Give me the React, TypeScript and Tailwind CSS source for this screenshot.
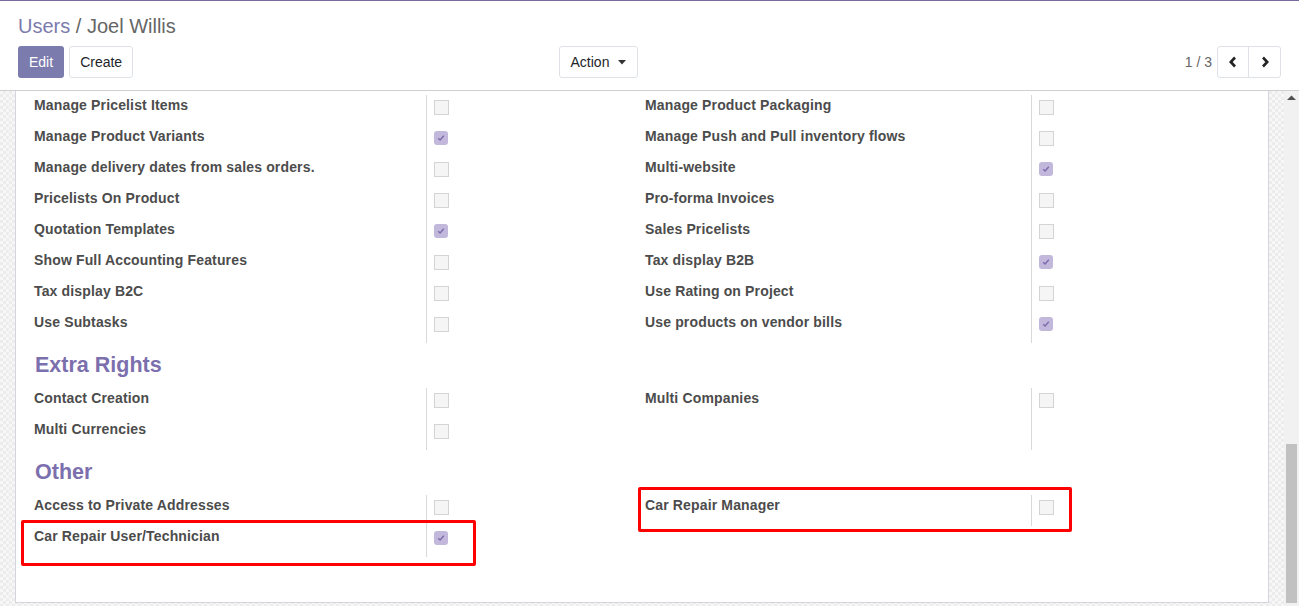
import React from 'react';

type Right = { label: string; checked: boolean } | null;

const mainLeft: Right[] = [
  { label: 'Manage Pricelist Items', checked: false },
  { label: 'Manage Product Variants', checked: true },
  { label: 'Manage delivery dates from sales orders.', checked: false },
  { label: 'Pricelists On Product', checked: false },
  { label: 'Quotation Templates', checked: true },
  { label: 'Show Full Accounting Features', checked: false },
  { label: 'Tax display B2C', checked: false },
  { label: 'Use Subtasks', checked: false },
];

const mainRight: Right[] = [
  { label: 'Manage Product Packaging', checked: false },
  { label: 'Manage Push and Pull inventory flows', checked: false },
  { label: 'Multi-website', checked: true },
  { label: 'Pro-forma Invoices', checked: false },
  { label: 'Sales Pricelists', checked: false },
  { label: 'Tax display B2B', checked: true },
  { label: 'Use Rating on Project', checked: false },
  { label: 'Use products on vendor bills', checked: true },
];

const checker =
  'bg-[conic-gradient(#ececec_25%,#f7f7f7_0_50%,#ececec_0_75%,#f7f7f7_0)] bg-[length:6px_6px]';

function Checkbox({ checked }: { checked: boolean }) {
  if (checked) {
    return (
      <div className="w-[14px] h-[14px] rounded-[3px] bg-[#c2b8dc] flex items-center justify-center">
        <svg width="8" height="8" viewBox="0 0 8 8">
          <path d="M1.2 4.2 L3.1 6 L6.8 1.8" fill="none" stroke="#7d6bab" strokeWidth="1.4" />
        </svg>
      </div>
    );
  }
  return <div className="w-[15px] h-[15px] bg-[#f5f5f5] border border-[#d4d4d4]" />;
}

function Row({ item, labelWidth }: { item: Right; labelWidth: string }) {
  return (
    <div className="flex h-[31px]">
      <div className={`${labelWidth} text-[14px] tracking-[0.15px] leading-[20px] font-bold text-[#4c4c4c]`}>
        {item ? item.label : ''}
      </div>
      <div className="flex-1 border-l border-[#d9d9d9] pl-[7px] pt-[5px]">
        {item && <Checkbox checked={item.checked} />}
      </div>
    </div>
  );
}

function Group({ left, right, top = '' }: { left: Right[]; right: Right[]; top?: string }) {
  return (
    <div className={`flex ${top}`}>
      <div className="w-[611px] flex flex-col">
        {left.map((item, i) => (
          <Row key={i} item={item} labelWidth="w-[392px]" />
        ))}
      </div>
      <div className="w-[415px] flex flex-col">
        {right.map((item, i) => (
          <Row key={i} item={item} labelWidth="w-[386px]" />
        ))}
      </div>
    </div>
  );
}

export default function App() {
  return (
    <div className="w-[1299px] h-[606px] overflow-hidden flex flex-col bg-white font-['Liberation_Sans',Arial,sans-serif] border-t border-[#7c6a9c]">
      {/* Control panel */}
      <div className="h-[90px] shrink-0 border-b border-[#cfcfcf] px-[18px] pt-[13px]">
        <div className="text-[20px] leading-[24px] text-[#666666]">
          <span className="text-[#7c7bad]">Users</span>
          <span> / Joel Willis</span>
        </div>
        <div className="mt-[8px] flex items-center h-[32px]">
          <div className="flex gap-[5px] w-[541px]">
            <button className="h-[32px] px-[11px] rounded-[3px] bg-[#7c7bad] text-white text-[14px]">
              Edit
            </button>
            <button className="h-[32px] px-[10px] rounded-[3px] border border-[#dee2e6] text-[#212529] text-[14px]">
              Create
            </button>
          </div>
          <button className="h-[32px] w-[79px] rounded-[3px] border border-[#dee2e6] text-[#212529] text-[14px] flex items-center justify-center gap-[9px]">
            Action
            <svg width="8" height="5" viewBox="0 0 8 5">
              <path d="M0 0 H8 L4 4.5 Z" fill="#333" />
            </svg>
          </button>
          <div className="ml-auto flex items-center gap-[5px]">
            <span className="text-[14px] text-[#666666]">1 / 3</span>
            <div className="flex h-[32px] border border-[#dee2e6] rounded-[3px]">
              <div className="w-[31px] flex items-center justify-center border-r border-[#dee2e6]">
                <svg width="10" height="12" viewBox="0 0 10 12">
                  <path d="M7 1.5 L2.8 6 L7 10.5" fill="none" stroke="#222" strokeWidth="2.6" />
                </svg>
              </div>
              <div className="w-[31px] flex items-center justify-center">
                <svg width="10" height="12" viewBox="0 0 10 12">
                  <path d="M3 1.5 L7.2 6 L3 10.5" fill="none" stroke="#222" strokeWidth="2.6" />
                </svg>
              </div>
            </div>
          </div>
        </div>
      </div>

      {/* Content */}
      <div className={`flex-1 flex ${checker}`}>
        <div className="w-[15px]" />
        <div className="w-[1254px] h-[512px] bg-white border-x border-b border-[#d6d4de] relative pl-[18px]">
          <Group left={mainLeft} right={mainRight} top="pt-[4px]" />

          <div className="mt-[8px] mb-[9px] h-[28px] pl-[1px] text-[21.5px] leading-[28px] font-bold text-[#7c6fad]">
            Extra Rights
          </div>
          <Group
            left={[
              { label: 'Contact Creation', checked: false },
              { label: 'Multi Currencies', checked: false },
            ]}
            right={[{ label: 'Multi Companies', checked: false }, null]}
          />

          <div className="mt-[8px] mb-[9px] h-[28px] pl-[1px] text-[21.5px] leading-[28px] font-bold text-[#7c6fad]">
            Other
          </div>
          <Group
            left={[
              { label: 'Access to Private Addresses', checked: false },
              { label: 'Car Repair User/Technician', checked: true },
            ]}
            right={[{ label: 'Car Repair Manager', checked: false }]}
          />

          {/* annotation boxes */}
          <div className="absolute left-[5px] top-[429px] w-[455px] h-[46px] border-[3px] border-[#ff0000] rounded-[2px]" />
          <div className="absolute left-[622px] top-[396px] w-[434px] h-[45px] border-[3px] border-[#ff0000] rounded-[2px]" />
        </div>
        <div className="w-[15px]" />
        <div className="w-[15px] bg-[#f1f1f1] flex flex-col items-center">
          <svg className="mt-[4px]" width="9" height="6" viewBox="0 0 9 6">
            <path d="M0 5 H9 L4.5 0.5 Z" fill="#505050" />
          </svg>
          <div className="mt-auto mb-[3px] w-[11px] h-[159px] bg-[#c1c1c1]" />
        </div>
      </div>
    </div>
  );
}
